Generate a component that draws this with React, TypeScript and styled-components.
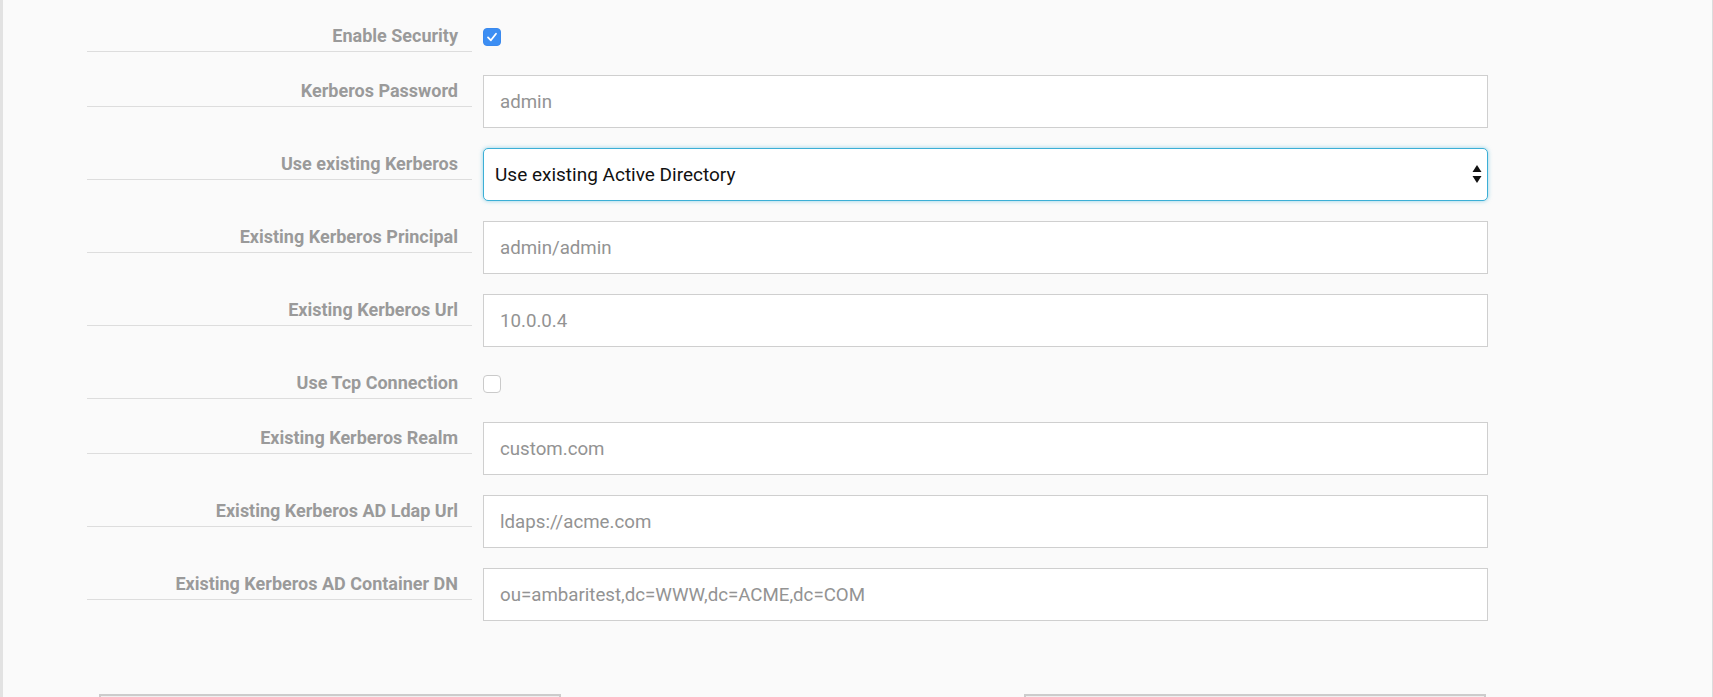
import React from "react";
import styled, { createGlobalStyle } from "styled-components";

const GlobalStyle = createGlobalStyle`
  html, body {
    margin: 0;
    padding: 0;
    background: #fafafa;
  }
  body {
    font-family: Roboto, "Liberation Sans", Arial, sans-serif;
    overflow: hidden;
  }
  * { box-sizing: border-box; }
`;

const Panel = styled.div`
  height: 697px;
  overflow: hidden;
  background: #fafafa;
  border-left: 3px solid #e2e2e2;
  border-right: 1px solid #dcdcdc;
  padding-top: 20px;
`;

const Form = styled.div`
  margin-left: 84px;
  width: 1401px;
  display: flex;
  flex-direction: column;
`;

const Row = styled.div<{ $compact?: boolean }>`
  display: flex;
  align-items: flex-start;
  gap: 11px;
  margin-bottom: 20px;
  min-height: ${(p) => (p.$compact ? "35px" : "53px")};
`;

const Label = styled.label`
  flex: 0 0 385px;
  width: 385px;
  padding: 5px 14px 5px 0;
  line-height: 21px;
  text-align: right;
  font-family: Roboto, "Liberation Sans", Arial, sans-serif;
  font-weight: 700;
  font-size: 18px;
  color: #9a9a9a;
  border-bottom: 1px solid #dddddd;
  white-space: nowrap;
`;

const Control = styled.div`
  flex: 1;
  display: flex;
  align-items: flex-start;
`;

const TextInput = styled.input`
  width: 100%;
  height: 53px;
  padding: 1px 16px 0;
  border: 1px solid #cfcfcf;
  border-radius: 0;
  background: #ffffff;
  font-family: Roboto, "Liberation Sans", Arial, sans-serif;
  font-size: 18.7px;
  color: #939393;
  outline: none;
`;

const SelectWrap = styled.div`
  position: relative;
  width: 100%;
`;

const Select = styled.select`
  appearance: none;
  -webkit-appearance: none;
  width: 100%;
  height: 53px;
  padding: 0 40px 0 11px;
  border: 1px solid #3cafd6;
  border-radius: 5px;
  background: #ffffff;
  box-shadow: 0 0 4px rgba(60, 175, 214, 0.55);
  font-family: Roboto, "Liberation Sans", Arial, sans-serif;
  font-size: 19px;
  color: #111111;
  outline: none;
`;

const Arrows = styled.svg`
  position: absolute;
  right: 6px;
  top: 17px;
  width: 10px;
  height: 19px;
  pointer-events: none;
`;

const Box = styled.span<{ $checked?: boolean }>`
  display: inline-flex;
  align-items: center;
  justify-content: center;
  width: 18px;
  height: 18px;
  margin-top: 8px;
  border-radius: 4px;
  background: ${(p) => (p.$checked ? "#3c8ef3" : "#ffffff")};
  border: 1px solid ${(p) => (p.$checked ? "#3a89ee" : "#cacaca")};
`;

const Footer = styled.div`
  margin-top: 53px;
  margin-left: 12px;
  width: 1387px;
  display: flex;
  justify-content: space-between;
`;

const FooterButton = styled.div`
  width: 462px;
  height: 40px;
  border: 2px solid #cccccc;
  background: #f0f0f0;
`;

const CheckBox: React.FC<{ checked?: boolean }> = ({ checked }) => (
  <Box $checked={checked} role="checkbox" aria-checked={!!checked}>
    {checked && (
      <svg width="14" height="14" viewBox="0 0 14 14">
        <path d="M3 7.4 L5.9 10.3 L11 3.8" fill="none" stroke="#ffffff" strokeWidth="1.8" strokeLinecap="round" strokeLinejoin="round" />
      </svg>
    )}
  </Box>
);

type Field =
  | { kind: "check"; label: string; checked: boolean }
  | { kind: "text"; label: string; value: string }
  | { kind: "select"; label: string; value: string };

const fields: Field[] = [
  { kind: "check", label: "Enable Security", checked: true },
  { kind: "text", label: "Kerberos Password", value: "admin" },
  { kind: "select", label: "Use existing Kerberos", value: "Use existing Active Directory" },
  { kind: "text", label: "Existing Kerberos Principal", value: "admin/admin" },
  { kind: "text", label: "Existing Kerberos Url", value: "10.0.0.4" },
  { kind: "check", label: "Use Tcp Connection", checked: false },
  { kind: "text", label: "Existing Kerberos Realm", value: "custom.com" },
  { kind: "text", label: "Existing Kerberos AD Ldap Url", value: "ldaps://acme.com" },
  { kind: "text", label: "Existing Kerberos AD Container DN", value: "ou=ambaritest,dc=WWW,dc=ACME,dc=COM" },
];

export default function App() {
  return (
    <>
      <GlobalStyle />
      <Panel>
        <Form>
          {fields.map((f) => (
            <Row key={f.label} $compact={f.kind === "check"}>
              <Label>{f.label}</Label>
              <Control>
                {f.kind === "check" && <CheckBox checked={f.checked} />}
                {f.kind === "text" && <TextInput defaultValue={f.value} />}
                {f.kind === "select" && (
                  <SelectWrap>
                    <Select defaultValue={f.value}>
                      <option>Use existing Active Directory</option>
                      <option>Use existing MIT KDC</option>
                      <option>Create new MIT KDC</option>
                    </Select>
                    <Arrows viewBox="0 0 10 19">
                      <path d="M5 0 L9.5 7 L0.5 7 Z" fill="#111" />
                      <path d="M0.5 11 L9.5 11 L5 18 Z" fill="#111" />
                    </Arrows>
                  </SelectWrap>
                )}
              </Control>
            </Row>
          ))}
          <Footer>
            <FooterButton />
            <FooterButton />
          </Footer>
        </Form>
      </Panel>
    </>
  );
}
